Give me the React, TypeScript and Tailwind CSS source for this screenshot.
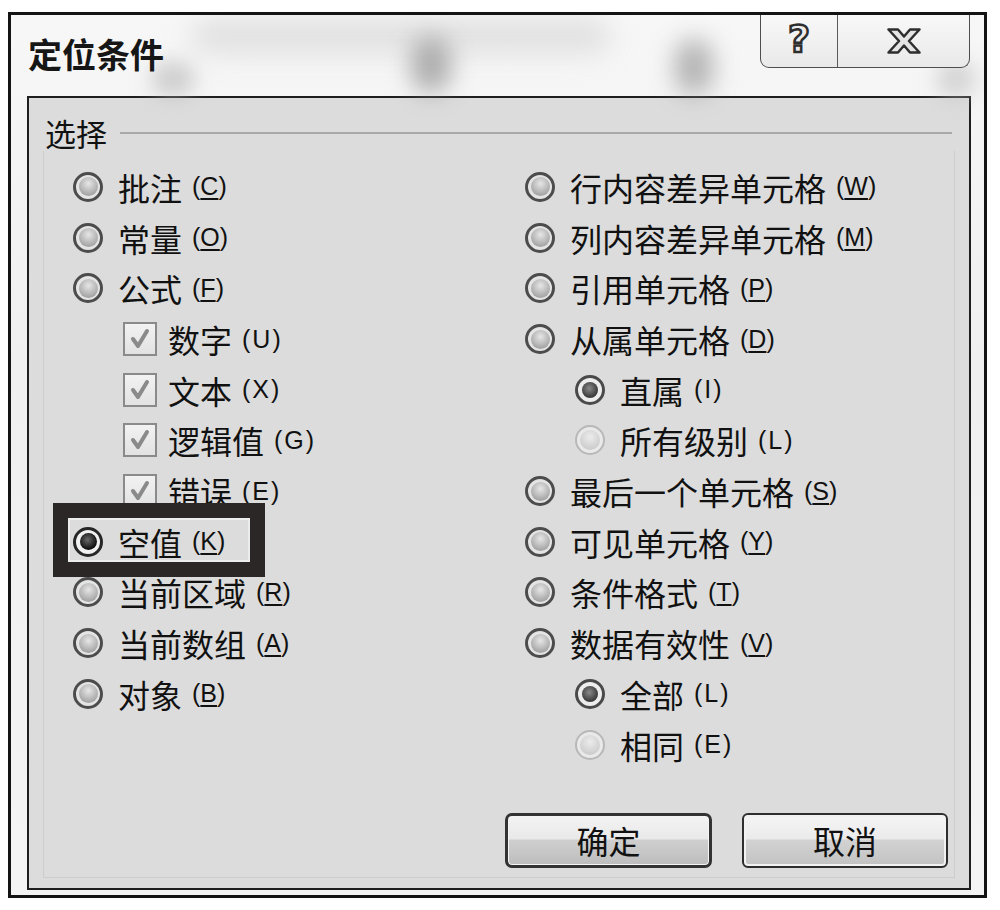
import React from "react";

type RadioKind = "normal" | "selected" | "sub" | "disabled";

function Radio({ kind }: { kind: RadioKind }) {
  if (kind === "disabled") {
    return (
      <span className="w-[30px] h-[30px] shrink-0 rounded-full border-2 border-[#b8b8b8] bg-[#e9e9e9] flex items-center justify-center">
        <span className="w-[20px] h-[20px] rounded-full bg-[radial-gradient(circle_at_50%_35%,#ececec,#c2c2c2)]" />
      </span>
    );
  }
  if (kind === "selected") {
    return (
      <span className="w-[30px] h-[30px] shrink-0 rounded-full border-[3px] border-[#262626] bg-[#f0f0f0] flex items-center justify-center">
        <span className="w-[17px] h-[17px] rounded-full bg-[radial-gradient(circle_at_45%_40%,#6a6a6a,#0c0c0c_70%)]" />
      </span>
    );
  }
  if (kind === "sub") {
    return (
      <span className="w-[30px] h-[30px] shrink-0 rounded-full border-[3px] border-[#4a4a4a] bg-[#ededed] flex items-center justify-center">
        <span className="w-[16px] h-[16px] rounded-full bg-[radial-gradient(circle_at_45%_40%,#8a8a8a,#333_75%)]" />
      </span>
    );
  }
  return (
    <span className="w-[30px] h-[30px] shrink-0 rounded-full border-[3px] border-[#4c4c4c] bg-[#e4e4e4] flex items-center justify-center">
      <span className="w-[19px] h-[19px] rounded-full bg-[radial-gradient(circle_at_50%_35%,#e6e6e6,#8e8e8e)]" />
    </span>
  );
}

function Check() {
  return (
    <span className="w-[34px] h-[34px] shrink-0 border-2 border-[#8a8a8a] bg-[linear-gradient(to_bottom,#f2f2f2,#e2e2e2)] flex items-center justify-center">
      <svg width="30" height="30" viewBox="0 0 30 30">
        <path d="M8 15 L13 22 L22 7" fill="none" stroke="#8a8a8a" strokeWidth="4" strokeLinecap="round" strokeLinejoin="round" />
      </svg>
    </span>
  );
}

function Key({ k, u, sub }: { k: string; u: boolean; sub?: boolean }) {
  return (
    <span className={"ml-[10px] text-[25px] leading-none font-['Liberation_Sans',sans-serif] text-[#111] " + (sub ? "tracking-[2px]" : "")}>
      (<span className={u ? "underline underline-offset-[3px] decoration-[2px]" : ""}>{k}</span>)
    </span>
  );
}

type Item = {
  t: string;
  k: string;
  type: "radio" | "check";
  kind?: RadioKind;
  indent?: boolean;
  u?: boolean;
  box?: boolean;
};

function Row({ it }: { it: Item }) {
  return (
    <div className={"relative h-[50.7px] flex items-center " + (it.indent ? "pl-[50px]" : "")}>
      {it.type === "radio" ? <Radio kind={it.kind || "normal"} /> : <Check />}
      <span className={"text-[32px] leading-none text-[#111] " + (it.type === "radio" ? "ml-[15px]" : "ml-[11px]")}>{it.t}</span>
      <Key k={it.k} u={!!it.u} sub={it.indent} />
      {it.box && (
        <div className="pointer-events-none absolute left-[-20px] top-[-13.5px] w-[212px] h-[74px] border-[15px] border-[#2b2727] z-10">
          <div className="w-full h-full border-2 border-[#ececec]" />
        </div>
      )}
    </div>
  );
}

const left: Item[] = [
  { t: "批注", k: "C", type: "radio", u: true },
  { t: "常量", k: "O", type: "radio", u: true },
  { t: "公式", k: "F", type: "radio", u: true },
  { t: "数字", k: "U", type: "check", indent: true },
  { t: "文本", k: "X", type: "check", indent: true },
  { t: "逻辑值", k: "G", type: "check", indent: true },
  { t: "错误", k: "E", type: "check", indent: true },
  { t: "空值", k: "K", type: "radio", kind: "selected", u: true, box: true },
  { t: "当前区域", k: "R", type: "radio", u: true },
  { t: "当前数组", k: "A", type: "radio", u: true },
  { t: "对象", k: "B", type: "radio", u: true },
];

const right: Item[] = [
  { t: "行内容差异单元格", k: "W", type: "radio", u: true },
  { t: "列内容差异单元格", k: "M", type: "radio", u: true },
  { t: "引用单元格", k: "P", type: "radio", u: true },
  { t: "从属单元格", k: "D", type: "radio", u: true },
  { t: "直属", k: "I", type: "radio", kind: "sub", indent: true },
  { t: "所有级别", k: "L", type: "radio", kind: "disabled", indent: true },
  { t: "最后一个单元格", k: "S", type: "radio", u: true },
  { t: "可见单元格", k: "Y", type: "radio", u: true },
  { t: "条件格式", k: "T", type: "radio", u: true },
  { t: "数据有效性", k: "V", type: "radio", u: true },
  { t: "全部", k: "L", type: "radio", kind: "sub", indent: true },
  { t: "相同", k: "E", type: "radio", kind: "disabled", indent: true },
];

export default function App() {
  return (
    <div className="w-[1000px] h-[910px] bg-white pt-[12px] pl-[8px] font-['Noto_Sans_CJK_SC','Liberation_Sans',sans-serif]">
      <div className="relative w-[979px] h-[886px] border-[3px] border-[#141414] bg-[linear-gradient(to_bottom,#f7f7f7,#efefef_40%,#f4f4f4)] overflow-hidden">
        {/* glass haze blobs */}
        <div className="pointer-events-none absolute left-[180px] top-[4px] w-[420px] h-[34px] rounded-full bg-[#dadada] blur-[14px] opacity-80" />
        <div className="pointer-events-none absolute left-[400px] top-[22px] w-[40px] h-[56px] rounded-full bg-[#909090] blur-[12px] opacity-70" />
        <div className="pointer-events-none absolute left-[664px] top-[24px] w-[38px] h-[56px] rounded-full bg-[#989898] blur-[12px] opacity-70" />
        <div className="pointer-events-none absolute left-[140px] top-[46px] w-[44px] h-[36px] rounded-full bg-[#b6b6b6] blur-[10px] opacity-60" />
        <div className="pointer-events-none absolute left-[925px] top-[44px] w-[40px] h-[40px] rounded-full bg-[#c0c0c0] blur-[10px] opacity-60" />

        <div className="relative h-[81px] flex justify-between items-start pl-[17px] pr-[14px]">
          <div className="mt-[19px] text-[34px] leading-[40px] font-bold text-[#161616]">定位条件</div>
          <div className="flex h-[53px] border border-t-0 border-[#4e4e4e] rounded-b-[9px] bg-[linear-gradient(to_bottom,#f8f8f8,#e9e9e9)]">
            <div className="w-[77px] h-full flex items-center justify-center border-r border-[#5a5a5a]">
              <span className="text-[38px] leading-none font-bold font-['DejaVu_Sans',sans-serif] text-[#ececec] [-webkit-text-stroke:2.5px_#2e2e2e] mt-[-4px]">?</span>
            </div>
            <div className="w-[131px] h-full flex items-center justify-center">
              <svg width="34" height="26" viewBox="0 0 34 26">
                <polygon points="1.5,1.5 11,1.5 17,8.5 23,1.5 32.5,1.5 22,13 32.5,24.5 23,24.5 17,17.5 11,24.5 1.5,24.5 12,13" fill="#e4e4e4" stroke="#2e2e2e" strokeWidth="2.5" strokeLinejoin="round" />
              </svg>
            </div>
          </div>
        </div>

        <div className="ml-[16px] w-[944px] h-[794px] border-2 border-[#1e1e1e] bg-[#dcdcdc] pt-[17px]">
          <div className="ml-[14px] mr-[14px]">
            <div className="h-[36px] flex items-center">
              <span className="ml-[2px] text-[31px] leading-[36px] text-[#111]">选择</span>
              <div className="flex-1 ml-[13px] mr-[3px] h-[2px] bg-[#a9a9a9]" />
            </div>
            <div className="border-l border-r border-b border-[#cdcdcd] pt-[10.6px] pb-[9px]">
              <div className="grid grid-cols-[452px_1fr] pl-[29px]">
                <div className="flex flex-col">
                  {left.map((it, i) => (
                    <Row key={i} it={it} />
                  ))}
                </div>
                <div className="flex flex-col">
                  {right.map((it, i) => (
                    <Row key={i} it={it} />
                  ))}
                </div>
              </div>
              <div className="mt-[43px] flex justify-end gap-[30px] pr-[6px]">
                <button className="w-[207px] h-[55px] rounded-[7px] border-[3px] border-[#333] bg-[linear-gradient(to_bottom,#f3f3f3_0%,#e9e9e9_46%,#cfcfcf_50%,#bdbdbd_100%)] shadow-[inset_0_0_0_1px_#f4f4f4] text-[32px] leading-none text-[#111] flex items-center justify-center">
                  确定
                </button>
                <button className="w-[206px] h-[55px] rounded-[6px] border-2 border-[#2e2e2e] bg-[linear-gradient(to_bottom,#f5f5f5_0%,#ebebeb_46%,#d2d2d2_50%,#c2c2c2_100%)] shadow-[inset_0_0_0_2px_#f2f2f2] text-[32px] leading-none text-[#111] flex items-center justify-center">
                  取消
                </button>
              </div>
            </div>
          </div>
        </div>
      </div>
    </div>
  );
}
